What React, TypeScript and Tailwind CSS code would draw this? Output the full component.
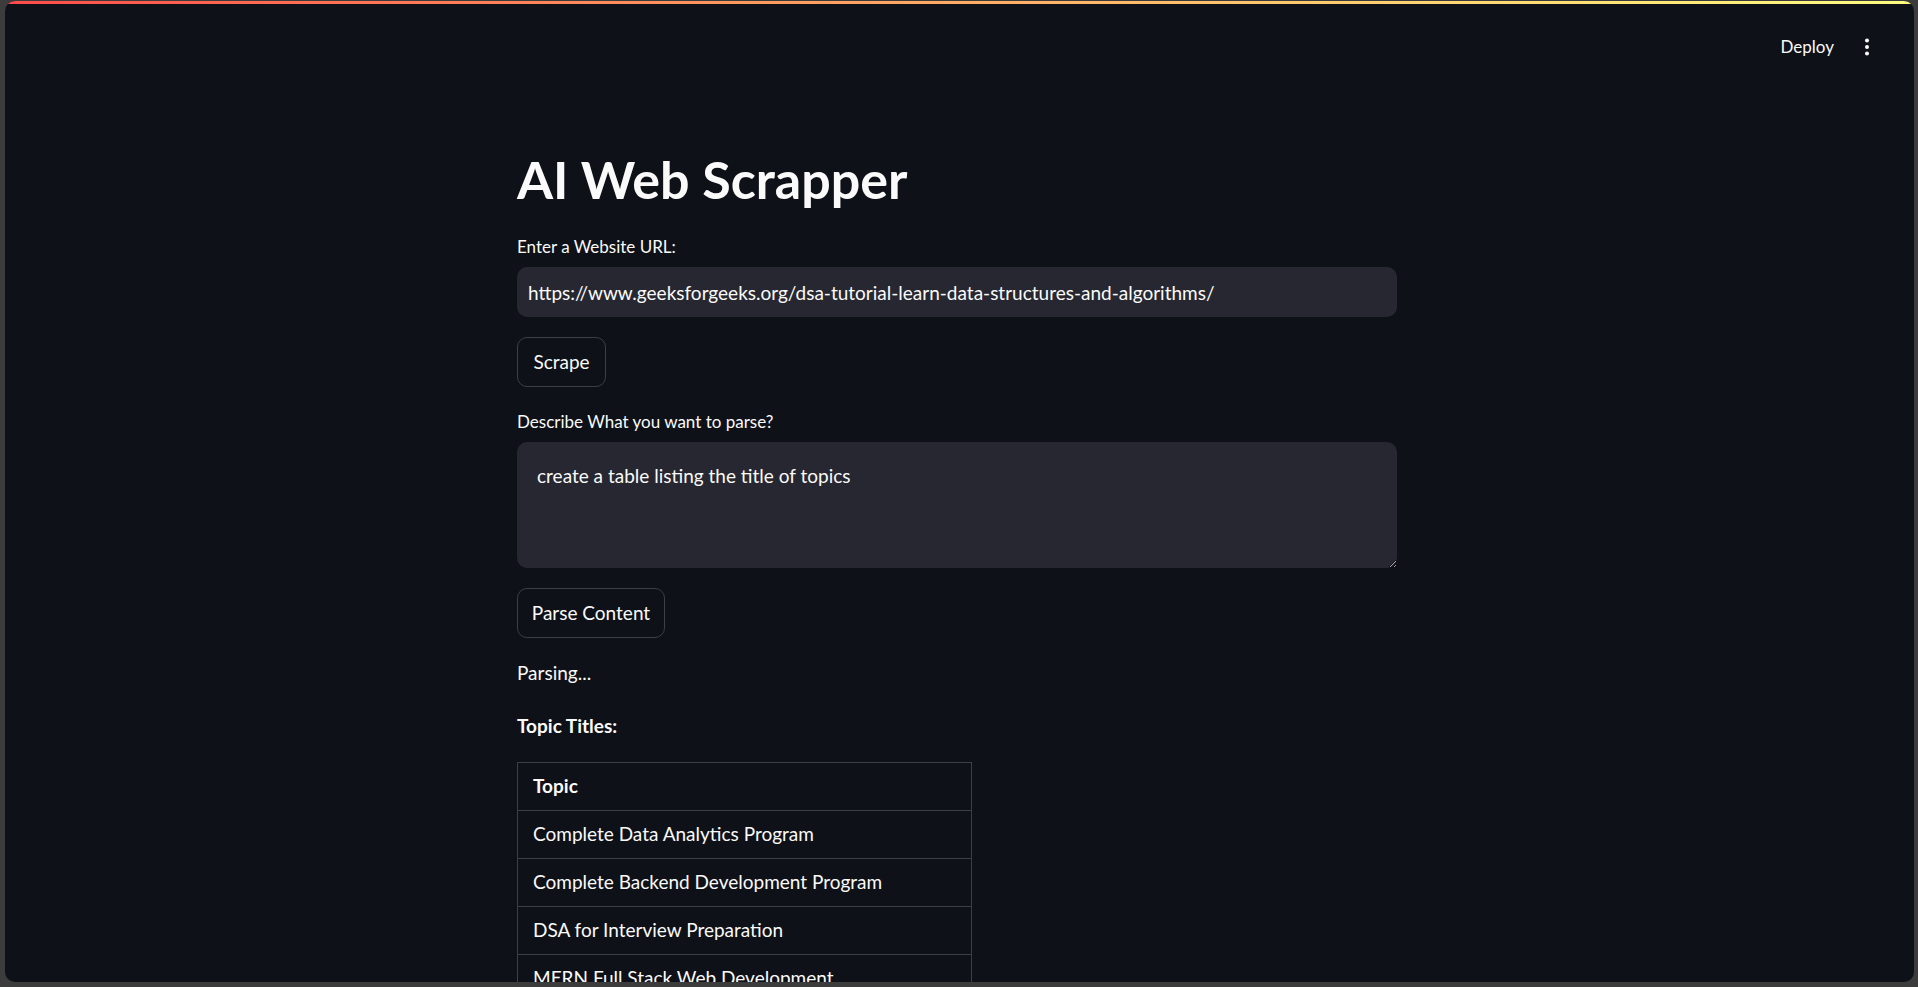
import React from "react";

const topics = [
  "Complete Data Analytics Program",
  "Complete Backend Development Program",
  "DSA for Interview Preparation",
  "MERN Full Stack Web Development",
  "Data Structures and Algorithms",
];

function KebabIcon() {
  return (
    <svg width="6" height="18" viewBox="0 0 6 18" fill="#fafafa">
      <circle cx="3" cy="2.5" r="2" />
      <circle cx="3" cy="9" r="2" />
      <circle cx="3" cy="15.5" r="2" />
    </svg>
  );
}

export default function App() {
  return (
    <div className="h-screen w-full bg-[#3c3c3c] pl-[5px] pr-[4px] pt-[1px] pb-[5px] font-['Lato',sans-serif] text-[#fafafa]">
      <div className="relative h-full w-full overflow-hidden rounded-[10px] bg-[#0e1117]">
        {/* decoration line */}
        <div className="h-[3px] w-full bg-gradient-to-r from-[#ff4b4b] to-[#fffd80]" />

        {/* header */}
        <div className="flex h-[86px] items-center justify-end pr-[44px]">
          <span className="mr-[30px] text-[17px] leading-[20px]">Deploy</span>
          <span className="flex items-center">
            <KebabIcon />
          </span>
        </div>

        {/* main column */}
        <div className="ml-[512px] w-[880px]">
          <h1 className="mt-[58px] text-[52px] font-bold leading-[62px]">AI Web Scrapper</h1>

          <label className="mt-[27px] block text-[17px] leading-[20px]">Enter a Website URL:</label>
          <input
            readOnly
            value="https://www.geeksforgeeks.org/dsa-tutorial-learn-data-structures-and-algorithms/"
            className="mt-[10px] block h-[50px] w-full rounded-[10px] bg-[#262730] pl-[11px] text-[19px] text-[#fafafa] outline-none"
          />

          <button className="mt-[20px] flex h-[50px] w-[89px] items-center justify-center rounded-[10px] border border-[#3d3f46] bg-[#0e1117] text-[19px]">
            Scrape
          </button>

          <label className="mt-[25px] block text-[17px] leading-[20px]">Describe What you want to parse?</label>
          <textarea
            readOnly
            defaultValue="create a table listing the title of topics"
            className="mt-[10px] block h-[126px] w-full rounded-[10px] bg-[#262730] px-[20px] py-[18px] text-[19px] leading-[32px] text-[#fafafa] outline-none"
          />

          <button className="mt-[20px] flex h-[50px] w-[148px] items-center justify-center rounded-[10px] border border-[#3d3f46] bg-[#0e1117] text-[19px]">
            Parse Content
          </button>

          <p className="mt-[23px] text-[19px] leading-[23px]">Parsing...</p>

          <p className="mt-[30px] text-[19px] font-bold leading-[23px]">Topic Titles:</p>

          <table className="mt-[25px] w-[455px] border-collapse text-[19px]">
            <thead>
              <tr>
                <th className="h-[48px] border border-[#3d3f46] px-[15px] text-left font-bold">Topic</th>
              </tr>
            </thead>
            <tbody>
              {topics.map((t) => (
                <tr key={t}>
                  <td className="h-[48px] border border-[#3d3f46] px-[15px]">{t}</td>
                </tr>
              ))}
            </tbody>
          </table>
        </div>
      </div>
    </div>
  );
}
